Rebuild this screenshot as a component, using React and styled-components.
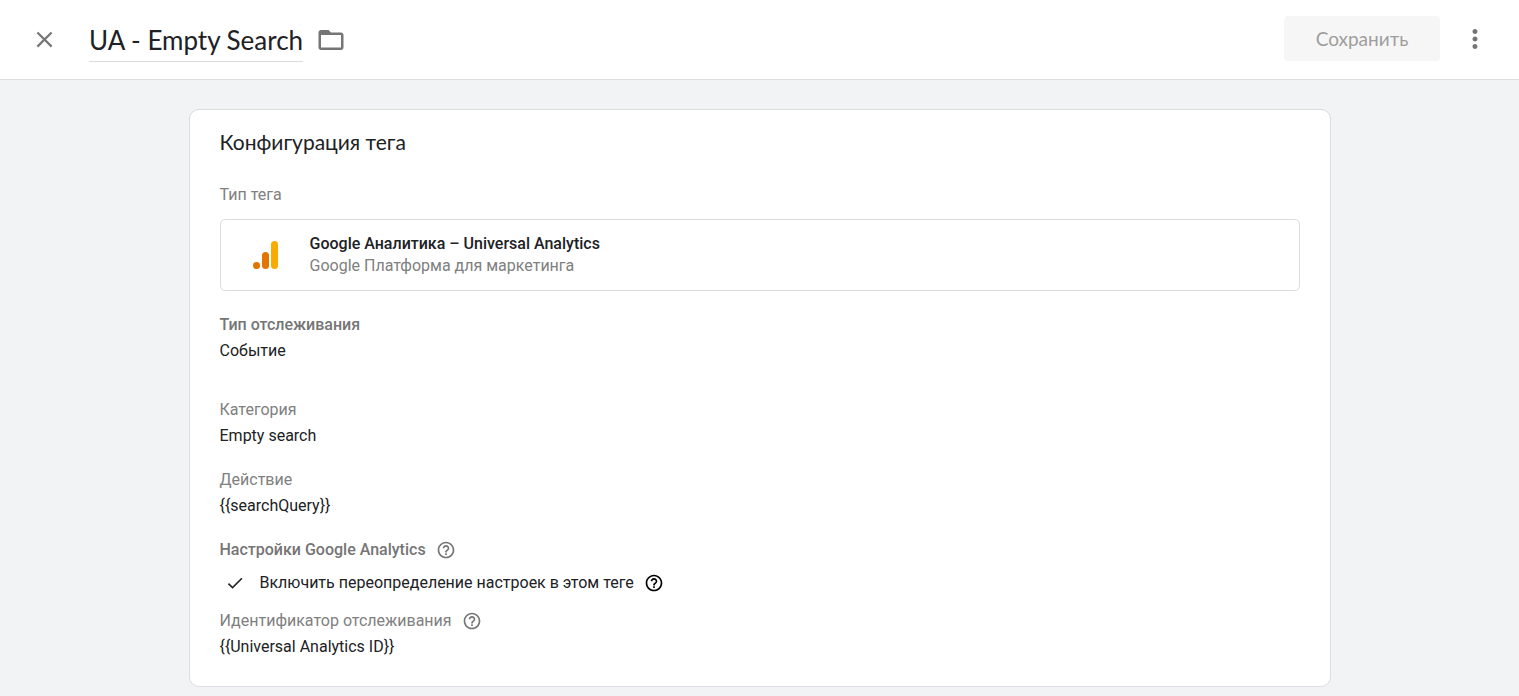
import React, { useState } from "react";
import styled, { createGlobalStyle } from "styled-components";
import {
	MdCheck,
	MdClose,
	MdFolderOpen,
	MdHelpOutline,
	MdMoreVert,
} from "react-icons/md";

const GlobalStyle = createGlobalStyle`
	* {
		box-sizing: border-box;
	}
	body {
		margin: 0;
		background-color: #f1f3f4;
		font-family: Roboto, "Liberation Sans", sans-serif;
		font-size: 16px;
		line-height: 26px;
		color: #202124;
	}
	button,
	input {
		font: inherit;
		color: inherit;
	}
`;

const AnalyticsLogo = () => (
	<svg width="26" height="28" viewBox="0 0 26 28" aria-hidden="true">
		<rect x="18" y="0" width="7" height="28" rx="3.5" fill="#f9ab00" />
		<rect x="9" y="11" width="7" height="17" rx="3.5" fill="#e37400" />
		<circle cx="3.6" cy="24.5" r="3.5" fill="#e37400" />
	</svg>
);

const Help = ({ dark, label }) => (
	<StyledHelpBtn type="button" $dark={dark} aria-label={label}>
		<MdHelpOutline size={20} />
	</StyledHelpBtn>
);

const App = () => {
	const [name, setName] = useState("UA - Empty Search");
	const [override, setOverride] = useState(true);

	return (
		<>
			<GlobalStyle />
			<StyledHeader>
				<StyledIconBtn type="button" aria-label="Закрыть">
					<MdClose size={27} />
				</StyledIconBtn>
				<StyledNameInput
					aria-label="Название тега"
					value={name}
					onChange={(e) => setName(e.target.value)}
				/>
				<StyledIconBtn type="button" aria-label="Папка">
					<MdFolderOpen size={30} />
				</StyledIconBtn>
				<StyledHeaderActions>
					<StyledSaveBtn type="button" disabled>
						Сохранить
					</StyledSaveBtn>
					<StyledIconBtn type="button" aria-label="Ещё">
						<MdMoreVert size={30} />
					</StyledIconBtn>
				</StyledHeaderActions>
			</StyledHeader>
			<StyledMain>
				<StyledCard>
					<StyledCardTitle>Конфигурация тега</StyledCardTitle>
					<StyledLabel>Тип тега</StyledLabel>
					<StyledTagType type="button">
						<AnalyticsLogo />
						<StyledTagInfo>
							<StyledTagName>Google Аналитика – Universal Analytics</StyledTagName>
							<StyledTagVendor>Google Платформа для маркетинга</StyledTagVendor>
						</StyledTagInfo>
					</StyledTagType>
					<StyledField $gap={21}>
						<StyledLabel $strong>Тип отслеживания</StyledLabel>
						<StyledValue>Событие</StyledValue>
					</StyledField>
					<StyledField $gap={33}>
						<StyledLabel>Категория</StyledLabel>
						<StyledValue>Empty search</StyledValue>
					</StyledField>
					<StyledField $gap={18}>
						<StyledLabel>Действие</StyledLabel>
						<StyledValue>{"{{searchQuery}}"}</StyledValue>
					</StyledField>
					<StyledField $gap={18}>
						<StyledLabel $strong>
							Настройки Google Analytics
							<Help label="Справка: настройки" />
						</StyledLabel>
					</StyledField>
					<StyledCheckRow>
						<StyledCheckLabel>
							<StyledCheckbox
								type="checkbox"
								checked={override}
								onChange={(e) => setOverride(e.target.checked)}
							/>
							<StyledTick size={20} aria-hidden="true" />
							Включить переопределение настроек в этом теге
						</StyledCheckLabel>
						<Help dark label="Справка: переопределение" />
					</StyledCheckRow>
					<StyledField $gap={12}>
						<StyledLabel>
							Идентификатор отслеживания
							<Help label="Справка: идентификатор" />
						</StyledLabel>
						<StyledValue>{"{{Universal Analytics ID}}"}</StyledValue>
					</StyledField>
				</StyledCard>
			</StyledMain>
		</>
	);
};

export default App;

const StyledHeader = styled.header`
	display: flex;
	align-items: center;
	height: 80px;
	padding: 0 29px;
	background-color: #fff;
	border-bottom: 1px solid #dadce0;
`;

const StyledIconBtn = styled.button`
	display: flex;
	align-items: center;
	justify-content: center;
	flex-shrink: 0;
	width: 30px;
	height: 30px;
	padding: 0;
	border: none;
	background: none;
	color: #757575;
	cursor: pointer;
`;

const StyledNameInput = styled.input`
	field-sizing: content;
	min-width: 0;
	height: 44px;
	margin: 0 13px 0 30px;
	padding: 2px 0 0;
	border: none;
	border-bottom: 1px solid #dadce0;
	outline: none;
	background: none;
	font-family: Lato, sans-serif;
	font-size: 26px;
	line-height: 40px;
`;

const StyledHeaderActions = styled.div`
	display: flex;
	align-items: center;
	gap: 20px;
	margin-left: auto;
	padding-bottom: 2px;
`;

const StyledSaveBtn = styled.button`
	height: 45px;
	min-width: 156px;
	padding: 0 30px;
	border: none;
	border-radius: 4px;
	background-color: #f6f6f6;
	font-family: Lato, sans-serif;
	font-size: 19px;
	color: #9e9e9e;
`;

const StyledMain = styled.main`
	padding: 29px 20px;
`;

const StyledCard = styled.section`
	max-width: 1142px;
	margin: 0 auto;
	padding: 18px 30px 26px;
	border: 1px solid #dadce0;
	border-radius: 10px;
	background-color: #fff;
`;

const StyledCardTitle = styled.h2`
	margin: 0 0 26px;
	font-family: Lato, sans-serif;
	font-size: 21px;
	font-weight: 400;
	line-height: 28px;
`;

const StyledLabel = styled.div`
	display: flex;
	align-items: center;
	gap: 10px;
	font-weight: ${({ $strong }) => ($strong ? 500 : 400)};
	color: ${({ $strong }) => ($strong ? "#757575" : "#808080")};
`;

const StyledValue = styled.div`
	color: #202124;
`;

const StyledField = styled.div`
	margin-top: ${({ $gap }) => $gap}px;
`;

const StyledTagType = styled.button`
	display: flex;
	align-items: center;
	width: 100%;
	height: 72px;
	margin-top: 11px;
	padding: 0 32px;
	border: 1px solid #dadce0;
	border-radius: 5px;
	background-color: #fff;
	text-align: left;
	cursor: pointer;
`;

const StyledTagInfo = styled.span`
	display: flex;
	flex-direction: column;
	margin-left: 31px;
	line-height: 22px;
	padding-bottom: 1px;
`;

const StyledTagName = styled.span`
	font-weight: 500;
`;

const StyledTagVendor = styled.span`
	color: #808080;
`;

const StyledHelpBtn = styled.button`
	display: flex;
	padding: 0;
	border: none;
	background: none;
	color: ${({ $dark }) => ($dark ? "#000" : "#757575")};
	cursor: pointer;
`;

const StyledCheckRow = styled.div`
	display: flex;
	align-items: center;
	gap: 10px;
	margin-top: 7px;
`;

const StyledTick = styled(MdCheck)`
	grid-area: 1 / 1;
	visibility: hidden;
`;

const StyledCheckbox = styled.input`
	grid-area: 1 / 1;
	appearance: none;
	width: 20px;
	height: 20px;
	margin: 0;

	&:checked + ${StyledTick} {
		visibility: visible;
	}
`;

const StyledCheckLabel = styled.label`
	display: grid;
	grid-template-columns: 20px auto;
	align-items: center;
	column-gap: 15px;
	padding-left: 5px;
	cursor: pointer;
`;
